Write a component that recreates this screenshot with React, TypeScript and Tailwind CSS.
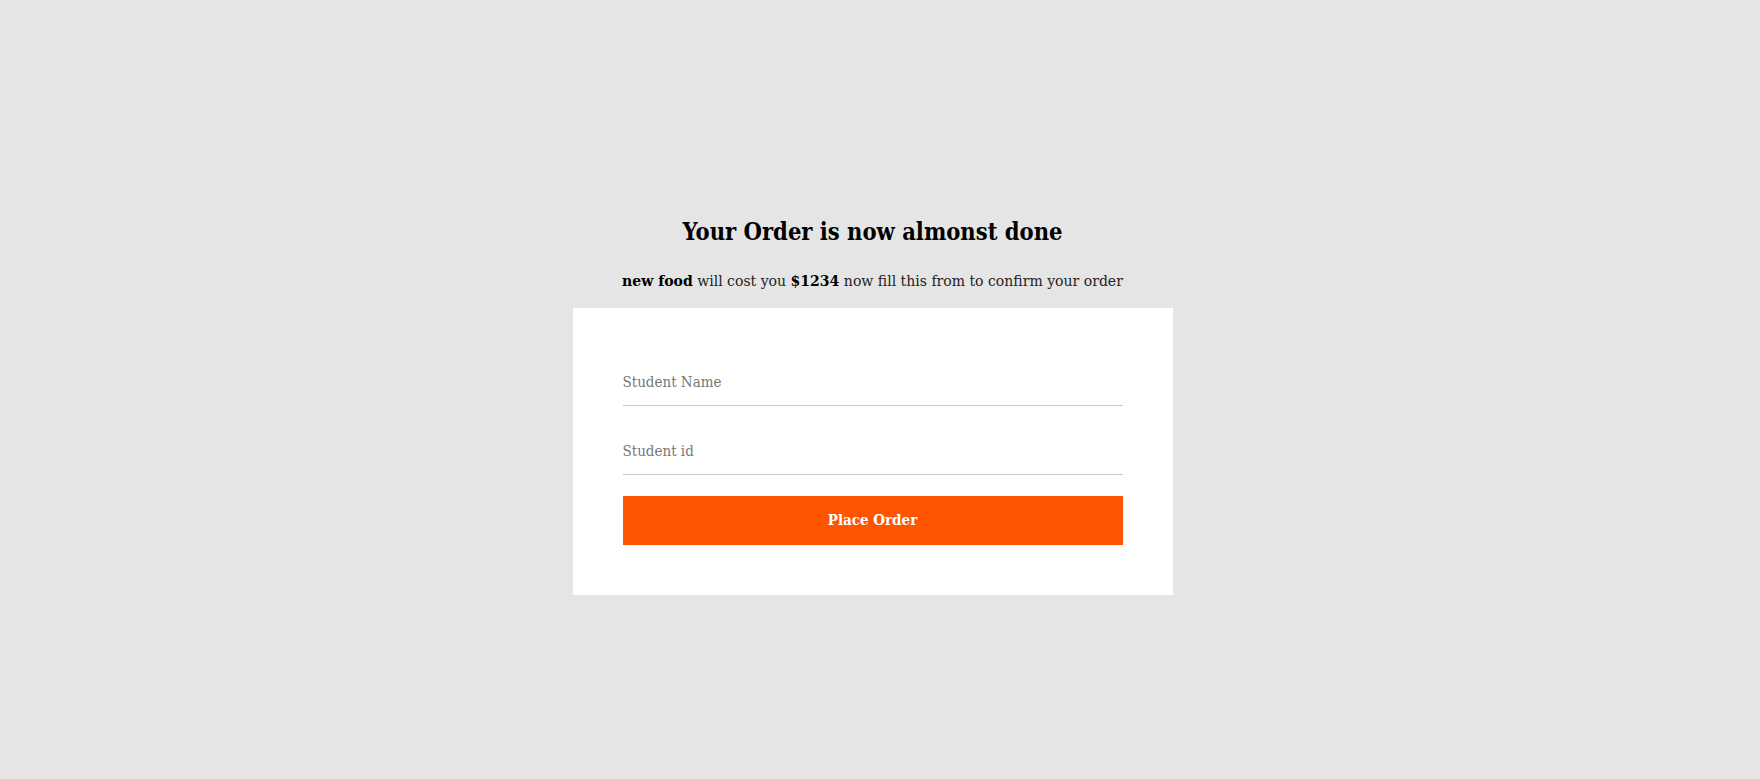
export default function App() {
  return (
    <div
      className="min-h-screen w-full bg-[#e5e5e5] flex flex-col items-center pt-[218px] pr-[15px] font-stretch-condensed"
      style={{ fontFamily: '"DejaVu Serif", serif' }}
    >
      <h1 className="text-[23.5px] leading-[29px] font-bold text-black">
        Your Order is now almonst done
      </h1>
      <p className="mt-[22px] text-[15.6px] leading-[24px] text-[#222]">
        <b className="text-black">new food</b> will cost you{' '}
        <b className="text-black">$1234</b> now fill this from to confirm your order
      </p>
      <form
        className="mt-[15px] w-[600px] bg-white p-[50px] flex flex-col"
        onSubmit={(e) => e.preventDefault()}
      >
        <input
          type="text"
          placeholder="Student Name"
          className="h-[48px] w-full border-b border-[#c8c8c8] text-[15px] text-[#333] placeholder:text-[#777] outline-none font-stretch-condensed"
        />
        <input
          type="text"
          placeholder="Student id"
          className="mt-[21px] h-[48px] w-full border-b border-[#c8c8c8] text-[15px] text-[#333] placeholder:text-[#777] outline-none font-stretch-condensed"
        />
        <button
          type="submit"
          className="mt-[21px] h-[49px] w-full bg-[#ff5500] text-white text-[15px] font-bold font-stretch-condensed"
        >
          Place Order
        </button>
      </form>
    </div>
  );
}
